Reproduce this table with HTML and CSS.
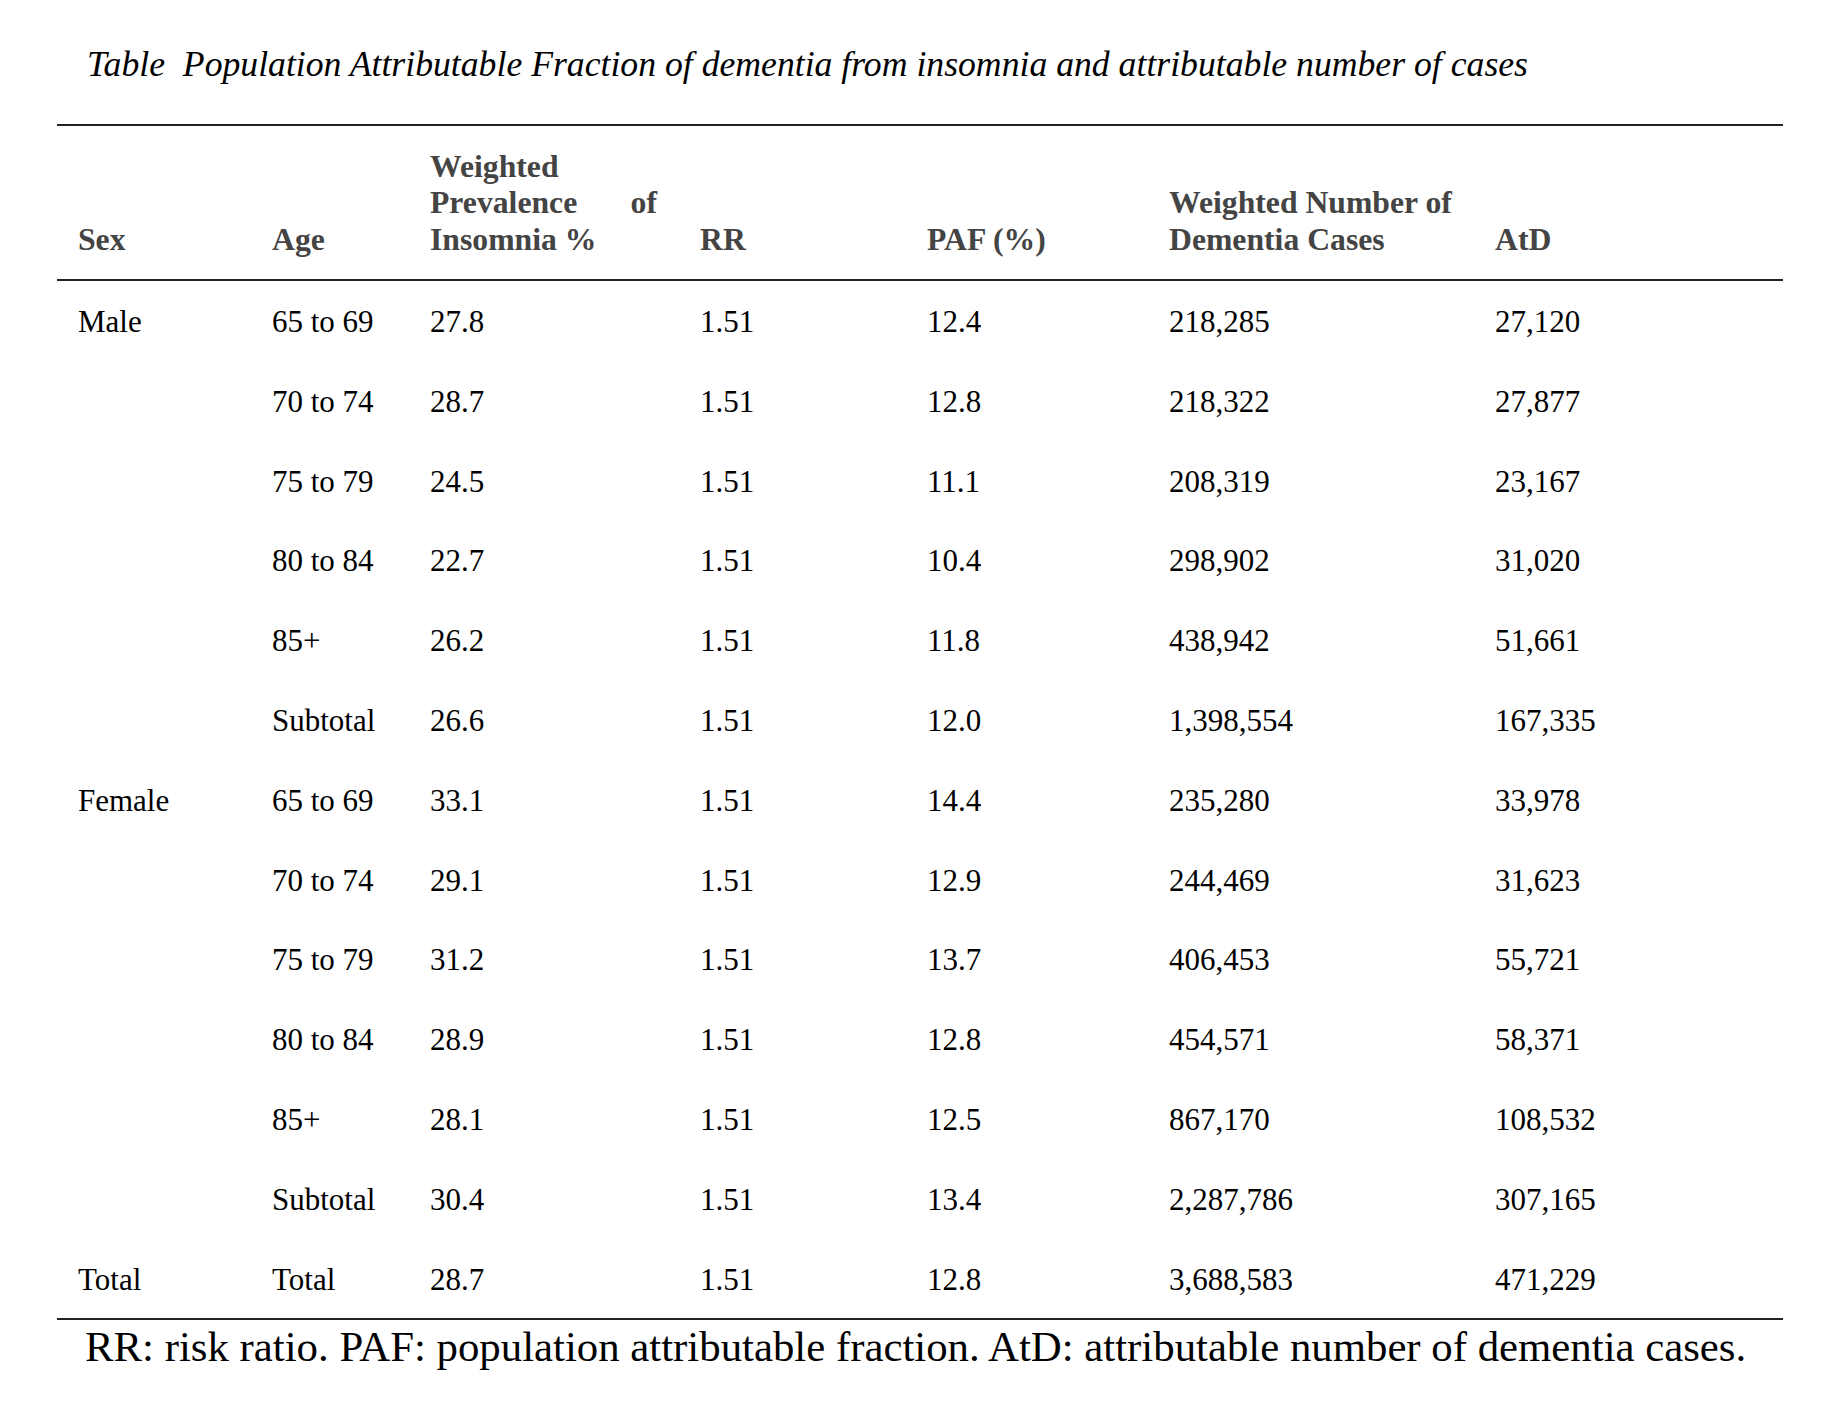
FILE: index.html
```html
<!DOCTYPE html>
<html lang="en">
<head>
<meta charset="utf-8">
<title>Population Attributable Fraction of dementia</title>
<link rel="stylesheet" href="styles.css">
</head>
<body>
<div class="page">
  <div class="caption">Table&nbsp; Population Attributable Fraction of dementia from insomnia and attributable number of cases</div>
  <table class="paf">
    <colgroup>
      <col class="c1"><col class="c2"><col class="c3"><col class="c4"><col class="c5"><col class="c6"><col class="c7">
    </colgroup>
    <thead>
      <tr>
        <th>Sex</th>
        <th>Age</th>
        <th><span class="hl">Weighted</span><span class="hl just"><span>Prevalence</span><span>of</span></span><span class="hl">Insomnia %</span></th>
        <th>RR</th>
        <th>PAF (%)</th>
        <th><span class="hl">Weighted Number of</span><span class="hl">Dementia Cases</span></th>
        <th>AtD</th>
      </tr>
    </thead>
    <tbody>
      <tr><td>Male</td><td>65 to 69</td><td>27.8</td><td>1.51</td><td>12.4</td><td>218,285</td><td>27,120</td></tr>
      <tr><td></td><td>70 to 74</td><td>28.7</td><td>1.51</td><td>12.8</td><td>218,322</td><td>27,877</td></tr>
      <tr><td></td><td>75 to 79</td><td>24.5</td><td>1.51</td><td>11.1</td><td>208,319</td><td>23,167</td></tr>
      <tr><td></td><td>80 to 84</td><td>22.7</td><td>1.51</td><td>10.4</td><td>298,902</td><td>31,020</td></tr>
      <tr><td></td><td>85+</td><td>26.2</td><td>1.51</td><td>11.8</td><td>438,942</td><td>51,661</td></tr>
      <tr><td></td><td>Subtotal</td><td>26.6</td><td>1.51</td><td>12.0</td><td>1,398,554</td><td>167,335</td></tr>
      <tr><td>Female</td><td>65 to 69</td><td>33.1</td><td>1.51</td><td>14.4</td><td>235,280</td><td>33,978</td></tr>
      <tr><td></td><td>70 to 74</td><td>29.1</td><td>1.51</td><td>12.9</td><td>244,469</td><td>31,623</td></tr>
      <tr><td></td><td>75 to 79</td><td>31.2</td><td>1.51</td><td>13.7</td><td>406,453</td><td>55,721</td></tr>
      <tr><td></td><td>80 to 84</td><td>28.9</td><td>1.51</td><td>12.8</td><td>454,571</td><td>58,371</td></tr>
      <tr><td></td><td>85+</td><td>28.1</td><td>1.51</td><td>12.5</td><td>867,170</td><td>108,532</td></tr>
      <tr><td></td><td>Subtotal</td><td>30.4</td><td>1.51</td><td>13.4</td><td>2,287,786</td><td>307,165</td></tr>
      <tr class="last"><td>Total</td><td>Total</td><td>28.7</td><td>1.51</td><td>12.8</td><td>3,688,583</td><td>471,229</td></tr>
    </tbody>
  </table>
  <p class="note">RR: risk ratio. PAF: population attributable fraction. AtD: attributable number of dementia cases.</p>
</div>
</body>
</html>
```
FILE: styles.css
```css
html, body {
  margin: 0;
  padding: 0;
  background: #ffffff;
}

body {
  font-family: "Liberation Serif", "Times New Roman", serif;
  color: #000000;
}

.page {
  width: 1726px;
  padding: 0 0 0 57px;
}

.caption {
  font-style: italic;
  font-size: 35.7px;
  line-height: 40px;
  padding: 44px 0 0 30px;
  margin: 0 0 40px 0;
  white-space: nowrap;
}

.paf {
  width: 1726px;
  table-layout: fixed;
  border-collapse: separate;
  border-spacing: 0;
}

.c1 { width: 194px; }
.c2 { width: 158px; }
.c3 { width: 270px; }
.c4 { width: 227px; }
.c5 { width: 242px; }
.c6 { width: 326px; }
.c7 { width: 309px; }

.paf th {
  font-weight: bold;
  font-size: 31.7px;
  line-height: 36.5px;
  color: #444444;
  text-align: left;
  vertical-align: bottom;
  padding: 22.5px 22px 21px 21px;
  border-top: 2px solid #222222;
  border-bottom: 2px solid #222222;
  white-space: nowrap;
}

.hl {
  display: block;
}

.just {
  display: flex;
  justify-content: space-between;
}

.paf td {
  font-size: 31px;
  line-height: 36px;
  text-align: left;
  vertical-align: top;
  padding: 23px 10px 20.8px 21px;
  white-space: nowrap;
}

.paf tr.last td {
  border-bottom: 2px solid #222222;
}

.note {
  font-size: 42.8px;
  line-height: 48px;
  margin: 3px 0 0 0;
  padding-left: 28px;
  white-space: nowrap;
}
```
